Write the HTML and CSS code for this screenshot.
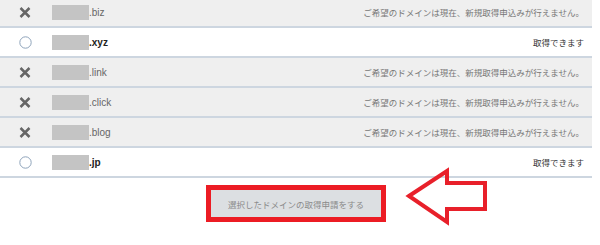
FILE: index.html
```html
<!DOCTYPE html>
<html lang="ja">
<head>
<meta charset="utf-8">
<link rel="stylesheet" href="styles.css">
</head>
<body>
<div class="page">
  <div class="list">
    <div class="row ng">
      <span class="icon"><svg width="12" height="11" viewBox="0 0 12 11"><path d="M1.5 1 L10.5 10 M10.5 1 L1.5 10" stroke="#666" stroke-width="2.5" fill="none"/></svg></span>
      <span class="mask"></span><span class="dom">.biz</span>
      <span class="status">ご希望のドメインは現在、新規取得申込みが行えません。</span>
    </div>
    <div class="row ok">
      <span class="icon"><svg width="13" height="13" viewBox="0 0 13 13"><circle cx="6.5" cy="6.5" r="5.7" stroke="#8ea3ba" stroke-width="1" fill="#fff"/></svg></span>
      <span class="mask"></span><span class="dom">.xyz</span>
      <span class="status">取得できます</span>
    </div>
    <div class="row ng">
      <span class="icon"><svg width="12" height="11" viewBox="0 0 12 11"><path d="M1.5 1 L10.5 10 M10.5 1 L1.5 10" stroke="#666" stroke-width="2.5" fill="none"/></svg></span>
      <span class="mask"></span><span class="dom">.link</span>
      <span class="status">ご希望のドメインは現在、新規取得申込みが行えません。</span>
    </div>
    <div class="row ng">
      <span class="icon"><svg width="12" height="11" viewBox="0 0 12 11"><path d="M1.5 1 L10.5 10 M10.5 1 L1.5 10" stroke="#666" stroke-width="2.5" fill="none"/></svg></span>
      <span class="mask"></span><span class="dom">.click</span>
      <span class="status">ご希望のドメインは現在、新規取得申込みが行えません。</span>
    </div>
    <div class="row ng">
      <span class="icon"><svg width="12" height="11" viewBox="0 0 12 11"><path d="M1.5 1 L10.5 10 M10.5 1 L1.5 10" stroke="#666" stroke-width="2.5" fill="none"/></svg></span>
      <span class="mask"></span><span class="dom">.blog</span>
      <span class="status">ご希望のドメインは現在、新規取得申込みが行えません。</span>
    </div>
    <div class="row ok">
      <span class="icon"><svg width="13" height="13" viewBox="0 0 13 13"><circle cx="6.5" cy="6.5" r="5.7" stroke="#8ea3ba" stroke-width="1" fill="#fff"/></svg></span>
      <span class="mask"></span><span class="dom">.jp</span>
      <span class="status">取得できます</span>
    </div>
  </div>
  <div class="actions">
    <div class="highlight">
      <button class="submit" type="button">選択したドメインの取得申請をする</button>
    </div>
  </div>
  <svg class="arrow" width="100" height="70" viewBox="400 165 100 70">
    <polygon points="409,198 447,173 447,185 485,185 485,211 447,211 447,224" fill="none" stroke="#e8202a" stroke-width="4" stroke-linejoin="miter"/>
  </svg>
</div>
</body>
</html>
```

FILE: styles.css
```css
html, body {
  margin: 0;
  padding: 0;
  background: #fff;
}
body {
  font-family: "Liberation Sans", Arial, "Noto Sans CJK JP", sans-serif;
  overflow: hidden;
}
.page {
  position: relative;
  width: 600px;
  height: 245px;
}
.list {
  width: 592px;
  margin-top: -2px;
}
.row {
  display: flex;
  align-items: center;
  height: 28px;
  border-bottom: 2px solid #cdd6e0;
}
.row.ng { background: #efefef; }
.row.ok { background: #fff; }
.icon {
  width: 50px;
  display: flex;
  justify-content: center;
  align-items: center;
  margin-right: 2px;
}
.mask {
  width: 37px;
  height: 15px;
  background: #c4c4c4;
}
.dom {
  font-size: 10px;
  color: #666;
}
.row.ok .dom {
  font-weight: bold;
  color: #222;
}
.status {
  margin-left: auto;
  padding-right: 8px;
  font-family: "Noto Sans CJK JP", sans-serif;
  font-size: 8.5px;
  color: #777;
}
.row.ok .status { color: #333; }
.actions {
  display: flex;
  justify-content: center;
  width: 592px;
  margin-top: 7px;
}
.highlight {
  border: 5px solid #ec1c24;
  display: flex;
}
.submit {
  width: 170px;
  height: 27px;
  margin: 0;
  padding: 0;
  border: 0;
  background: #dcdfe2;
  color: #8a8a8a;
  font-family: "Noto Sans CJK JP", sans-serif;
  font-size: 8.5px;
}
.arrow {
  position: absolute;
  left: 400px;
  top: 165px;
}
```
